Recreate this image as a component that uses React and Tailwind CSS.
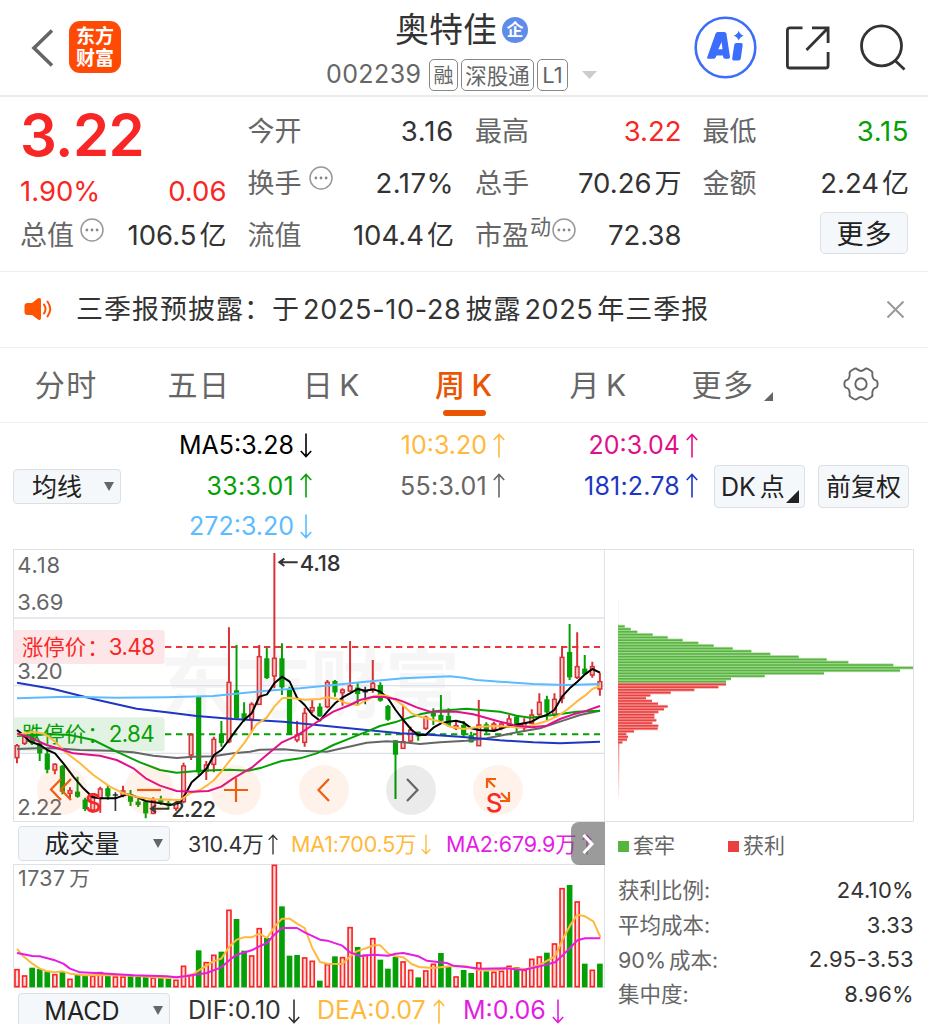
import React from "react";

const RED = "#d93236";
const GREEN = "#05a005";

// Chart geometry uses a grid of three units per pixel.
const STEP = 22.71;
const FIRST = 51;

// [kind, high, bodyTop, bodyBottom, low]
const CANDLES = [
  ["r", 597, 602, 638, 655], ["r", 565, 575, 595, 600], ["g", 560, 568, 590, 600], ["g", 590, 597, 623, 648],
  ["g", 615, 628, 672, 685], ["r", 655, 658, 675, 688], ["g", 660, 665, 738, 748], ["r", 727, 737, 745, 760],
  ["g", 695, 742, 753, 758], ["g", 758, 766, 790, 798], ["r", 745, 755, 795, 803], ["r", 725, 732, 760, 803],
  ["g", 720, 732, 752, 764], ["k", 742, 750, 750, 798], ["r", 722, 738, 752, 757], ["g", 735, 750, 768, 783],
  ["g", 762, 772, 778, 786], ["g", 768, 772, 803, 820], ["r", 757, 765, 805, 808], ["g", 752, 765, 770, 780],
  ["g", 768, 776, 780, 790], ["r", 770, 775, 790, 797], ["r", 653, 663, 770, 775], ["r", 565, 570, 630, 645],
  ["g", 458, 458, 680, 690], ["r", 648, 660, 678, 705], ["r", 575, 583, 658, 682], ["g", 528, 568, 592, 605],
  ["r", 247, 412, 590, 595], ["g", 300, 438, 518, 520], ["g", 472, 507, 520, 530], ["r", 472, 478, 522, 560],
  ["r", 300, 335, 478, 480], ["g", 308, 342, 397, 402], ["r", 24, 340, 393, 430], ["g", 295, 342, 425, 450],
  ["g", 425, 437, 565, 568], ["r", 528, 570, 585, 592], ["r", 488, 505, 592, 605], ["r", 465, 488, 497, 505],
  ["g", 475, 487, 512, 515], ["r", 405, 412, 485, 490], ["g", 405, 410, 440, 455], ["r", 430, 435, 443, 482],
  ["r", 288, 423, 438, 440], ["g", 412, 430, 445, 482], ["k", 425, 440, 440, 478], ["r", 345, 415, 435, 443],
  ["g", 412, 422, 465, 470], ["g", 480, 485, 522, 527], ["g", 585, 588, 627, 762], ["r", 483, 590, 610, 612],
  ["r", 545, 555, 588, 592], ["g", 560, 562, 572, 587], ["r", 512, 517, 550, 555], ["g", 490, 505, 512, 540],
  ["g", 450, 512, 525, 530], ["g", 490, 515, 540, 545], ["r", 530, 542, 550, 555], ["g", 528, 542, 568, 575],
  ["g", 560, 572, 590, 592], ["r", 465, 540, 602, 603], ["g", 532, 540, 555, 565], ["r", 530, 537, 553, 560],
  ["r", 530, 537, 548, 556], ["r", 510, 522, 538, 548], ["g", 512, 517, 545, 560], ["r", 520, 535, 548, 560],
  ["r", 493, 510, 535, 537], ["r", 445, 472, 508, 512], ["g", 452, 465, 500, 525], ["r", 445, 463, 508, 515],
  ["r", 303, 337, 460, 475], ["g", 237, 323, 395, 405], ["r", 262, 365, 397, 402], ["g", 330, 373, 385, 390],
  ["r", 350, 365, 390, 398], ["r", 383, 410, 432, 452],
];

const MA_LINES = [
  ["#666666", "51,612 110,610 165,610 240,615 330,617 400,622 460,632 530,639 580,635 640,634 700,625 750,620 780,614 850,613 900,617 980,620 1040,607 1100,593 1160,589 1210,592 1260,597 1320,592 1400,587 1460,580 1500,572 1560,560 1620,550 1680,530 1740,510 1800,497"],
  ["#1d37c4", "51,413 160,432 280,462 410,491 500,502 590,513 700,522 850,530 950,540 1100,555 1200,565 1300,570 1380,575 1500,586 1600,592 1680,595 1800,590"],
  ["#5cbcff", "51,460 200,455 350,458 500,457 640,453 800,437 900,430 1000,420 1120,408 1210,400 1350,394 1390,398 1430,405 1500,410 1600,417 1700,420 1800,417"],
  ["#05a005", "51,573 150,567 210,570 280,585 350,620 420,652 480,675 530,683 600,677 640,676 690,674 745,677 785,668 845,648 900,640 950,625 1000,600 1050,580 1100,560 1140,543 1190,530 1210,523 1260,508 1310,498 1400,491 1440,495 1500,500 1550,512 1590,518 1660,510 1730,500 1800,497"],
  ["#000000", "51,555 70,570 90,590 120,600 142,615 165,625 190,655 220,695 250,730 278,757 301,760 346,760 380,748 400,752 437,768 482,775 510,780 540,773 560,740 575,712 600,690 620,670 642,630 664,615 687,585 710,553 732,525 755,505 778,455 801,448 823,415 846,395 869,410 891,458 914,480 937,510 960,527 982,500 1005,475 1027,458 1050,445 1073,432 1096,437 1120,433 1141,440 1164,460 1187,495 1210,525 1235,555 1255,570 1277,570 1300,548 1323,535 1345,530 1368,527 1391,533 1414,550 1437,555 1482,558 1505,550 1527,543 1573,535 1595,530 1618,517 1640,510 1663,495 1686,455 1709,430 1732,410 1755,388 1777,372 1800,383"],
  ["#ffb93c", "51,570 100,560 135,567 165,590 195,620 240,655 280,690 330,725 370,745 414,757 460,763 540,765 570,745 600,735 620,722 642,705 664,680 687,650 732,595 770,538 800,518 823,485 846,460 869,458 914,464 960,462 982,457 1010,462 1040,475 1073,480 1100,465 1120,455 1141,450 1160,452 1187,465 1210,482 1235,505 1260,515 1290,522 1320,530 1350,545 1391,552 1440,545 1480,543 1530,545 1560,548 1600,540 1640,528 1670,515 1700,495 1730,470 1755,452 1777,432 1800,423"],
  ["#e0108a", "51,565 90,578 140,600 180,612 220,625 300,632 350,645 400,670 437,700 480,722 530,738 575,740 625,738 664,725 700,700 755,668 800,630 846,592 891,572 960,525 1000,500 1050,480 1080,465 1120,455 1150,456 1190,463 1210,470 1250,487 1290,500 1370,500 1420,508 1500,530 1550,542 1595,547 1640,542 1680,522 1720,508 1760,497 1800,483"],
];

const VOLUMES = "r448 r467 g444 g448 g455 r463 g457 r477 g465 g467 r468 r457 g465 r470 r470 g465 g472 g472 r473 g475 g478 r480 r438 r465 g392 r427 r405 g396 r270 g298 g393 r407 r325 g355 r135 g260 g408 g406 r413 r423 g483 r433 g410 r412 r322 g382 r405 r355 g420 g447 g412 r425 r450 g473 r452 r432 g400 g440 r470 g451 g460 r428 g455 r456 r453 r438 g442 r450 r417 r410 g399 r371 r205 g196 r245 g432 r450 g432"
  .split(" ")
  .map((v) => [v[0], Number(v.slice(1))]);

const VOL_LINES = [
  ["#ffb93c", "51,388 70,410 97,432 119,447 142,455 165,458 187,455 210,462 255,467 300,466 400,468 500,475 550,472 580,463 600,450 640,425 664,417 687,382 710,360 732,353 755,353 778,342 801,355 823,322 846,297 869,297 891,312 914,325 937,385 960,427 982,432 1027,433 1045,415 1070,395 1100,385 1120,377 1141,377 1165,402 1187,410 1210,413 1235,433 1257,442 1300,445 1350,440 1400,440 1440,452 1500,450 1520,445 1580,448 1620,435 1665,410 1690,355 1710,318 1732,285 1755,290 1780,305 1801,352"],
  ["#e41ce4", "51,400 97,409 119,410 165,422 190,432 210,447 240,458 300,461 400,467 500,470 530,473 560,469 620,460 664,443 690,420 710,405 755,392 778,380 801,370 823,345 846,325 891,325 914,338 960,360 982,363 1027,378 1050,398 1080,409 1120,405 1165,408 1187,402 1210,400 1255,410 1280,423 1340,430 1360,438 1400,442 1440,447 1520,446 1570,451 1620,440 1665,428 1690,405 1710,385 1732,362 1755,356 1801,356"],
];

const TRAPPED = [74, 92, 112, 158, 203, 248, 295, 341, 398, 454, 511, 596, 680, 745, 880, 939, 900, 672, 494, 393, 378];
const PROFIT = [378, 355, 283, 212, 151, 138, 156, 174, 203, 192, 175, 163, 163, 169, 157, 175, 173, 102, 79, 84, 81, 67];

function Arrow({ down = false, className = "" }) {
  return (
    <svg className={"shrink-0 " + className} width="12" height="25" viewBox="0 0 12 25" fill="none" stroke="currentColor" strokeWidth="1.6">
      {down ? <path d="M6 .5V23.5M.8 18L6 23.6 11.2 18" /> : <path d="M6 24.5V1.5M.8 7L6 1.4 11.2 7" />}
    </svg>
  );
}

function Dots() {
  return (
    <svg width="24" height="24" viewBox="0 0 24 24" className="shrink-0">
      <circle cx="12" cy="12" r="11" fill="none" stroke="#999" strokeWidth="1.5" />
      <circle cx="6.9" cy="12" r="1.4" fill="#888" />
      <circle cx="12" cy="12" r="1.4" fill="#888" />
      <circle cx="17.1" cy="12" r="1.4" fill="#888" />
    </svg>
  );
}

function Caret({ className = "" }) {
  return (
    <svg width="10" height="9" viewBox="0 0 10 9" className={className}>
      <path d="M0 0H10L5 9Z" fill="#666" />
    </svg>
  );
}

function Header() {
  return (
    <header className="flex h-[97px] border-b-2 border-[#ebebeb]">
      <div className="flex w-[326px] items-start pl-[31px]">
        <svg className="mt-[29px]" width="23" height="38" viewBox="0 0 23 38" fill="none" stroke="#666" strokeWidth="3.6">
          <path d="M21 1.5L3 19 21 36.5" />
        </svg>
        <div className="mt-[21px] ml-[15px] flex h-[52px] w-[52px] flex-col items-center justify-center rounded-[11px] bg-[#ff4a05] pt-px text-[19px] leading-[22px] font-bold text-white">
          <span>东方</span>
          <span>财富</span>
        </div>
      </div>
      <div className="w-[368px]">
        <div className="mt-[8px] flex h-[44px] items-center pl-[69px]">
          <span className="text-[34px] leading-[44px] text-[#333]">奥特佳</span>
          <span className="ml-[5px] flex h-[26px] w-[26px] items-center justify-center rounded-full bg-[#5e8ce8] text-[17px] leading-[26px] font-bold text-white">企</span>
        </div>
        <div className="mt-[7px] flex h-[32px] items-center text-[#666]">
          <span className="w-[103px] text-[25px] tracking-[0.4px]">002239</span>
          <span className="flex h-[32px] w-[29px] items-center justify-center rounded-[5px] border border-[#888] pt-[2px] text-[20px]">融</span>
          <span className="ml-[3px] flex h-[32px] w-[73px] items-center justify-center rounded-[5px] border border-[#888] pt-[2px] text-[21.5px]">深股通</span>
          <span className="ml-[3px] flex h-[32px] w-[31px] items-center justify-center rounded-[5px] border border-[#888] pt-px text-[22px]">L1</span>
          <svg className="ml-[14px]" width="15" height="8" viewBox="0 0 15 8"><path d="M0 0H15L7.5 8Z" fill="#ccc" /></svg>
        </div>
      </div>
      <div className="flex items-start">
        <svg className="mt-[16px]" width="63" height="63" viewBox="0 0 63 63">
          <circle cx="31.5" cy="31.5" r="29.8" fill="none" stroke="#3d6dfb" strokeWidth="2.6" />
          <path fill="#3d6dfb" fillRule="evenodd" d="M21.6 17.5q.6-1.5 2-1.500h6.800q1.700 0 2 1.600l3.600 23.200q.2 2-1.600 2h-3.300q-1.700 0-1.900-1.700l-.2-1.700h-6.400l-1 2.100q-.6 1.300-2 1.300h-5q-2.100 0-1.300-1.900zM24.300 33.200h4.200l-.9-7.200zM42.400 27h4.700q1.900 0 1.600 1.900L46.800 42.600q-.3 1.900-2.200 1.900h-4.800q-1.900 0-1.600-1.900l2-13.700q.3-1.900 2.200-1.900zM44.700 14.800q1.200 3.700 5 4.900-3.800 1.200-5 4.900-1.200-3.700-5-4.900 3.800-1.200 5-4.900z" />
        </svg>
        <svg className="mt-[25px] ml-[28px]" width="46" height="46" viewBox="0 0 46 46" fill="none" stroke="#333" strokeWidth="2.8">
          <path d="M17.500 2.800H5Q2.400 2.800 2.400 5.400V40.400Q2.400 43 5 43H40.500Q43.100 43 43.100 40.400V27" />
          <path d="M27 2.800H43.100V18M43 3L21.500 25" />
        </svg>
        <svg className="mt-[24px] ml-[29px]" width="48" height="48" viewBox="0 0 48 48" fill="none" stroke="#333" strokeWidth="2.8">
          <circle cx="21.500" cy="21.800" r="20" />
          <path d="M34.500 36L44.500 45.500" />
        </svg>
      </div>
    </header>
  );
}

function Cell({ label, extra, value, tone = "text-[#333]" }) {
  return (
    <div className="flex h-[52px] items-center justify-between">
      <div className="flex items-center text-[27px] text-[#666]">
        <span>{label}</span>
        {extra}
      </div>
      <span className={"text-[27.5px] whitespace-nowrap " + tone}>{value}</span>
    </div>
  );
}

function Wide({ n, u }) {
  return (
    <>
      {n}
      <span className="ml-[3px] text-[27px]">{u}</span>
    </>
  );
}

function Quote() {
  const up = "text-[#f92626]";
  return (
    <section className="grid h-[175px] grid-cols-4 gap-x-[21px] border-b border-[#eee] pt-[9px] pr-[19px] pl-[20px]">
      <div>
        <div className="h-[60px] text-[58px] leading-[58px] font-semibold tracking-[-0.6px] text-[#f92626]">3.22</div>
        <div className="flex h-[44px] items-center justify-between pt-[8px] text-[27.5px] text-[#f92626]">
          <span>1.90%</span>
          <span>0.06</span>
        </div>
        <Cell label="总值" extra={<span className="-mt-[13px] ml-[6px]"><Dots /></span>} value={<Wide n="106.5" u="亿" />} />
      </div>
      <div>
        <Cell label="今开" value={<span className="tracking-[0.8px]">3.16</span>} />
        <Cell label="换手" extra={<span className="-mt-[13px] ml-[7px]"><Dots /></span>} value={<span className="tracking-[0.5px]">2.17%</span>} />
        <Cell label="流值" value={<Wide n="104.4" u="亿" />} />
      </div>
      <div>
        <Cell label="最高" value="3.22" tone={up} />
        <Cell label="总手" value={<Wide n="70.26" u="万" />} />
        <Cell
          label="市盈"
          extra={<><span className="-mt-[18px] ml-px text-[21px]">动</span><span className="-mt-[13px] ml-px"><Dots /></span></>}
          value="72.38"
        />
      </div>
      <div>
        <Cell label="最低" value={<span className="tracking-[0.6px]">3.15</span>} tone="text-[#05a005]" />
        <Cell label="金额" value={<Wide n="2.24" u="亿" />} />
        <div className="flex h-[52px] items-start justify-end pt-[2px] pr-px">
          <button className="h-[42px] w-[88px] rounded-[5px] border border-[#dce0ea] bg-[#f5f8fa] pt-[2px] pl-px text-[27px] leading-[40px] tracking-[1px] text-[#222]">更多</button>
        </div>
      </div>
    </section>
  );
}

function Notice() {
  return (
    <section className="flex h-[76px] items-center border-b border-[#f0f0f0] pr-[23px] pl-[24px]">
      <svg className="-mt-[2px]" width="29" height="24" viewBox="0 0 29 24">
        <path d="M14 1.300Q17 0 17 3V21Q17 24 14 22.500L8 18H3.500Q.500 18 .500 15V9Q.500 6 3.500 6H8Z" fill="#ff5500" />
        <path d="M20 7.500Q23 12 20 16.500M23.500 4.500Q29 12 23.500 19.500" fill="none" stroke="#ff5500" strokeWidth="2" strokeLinecap="round" />
      </svg>
      <span className="ml-[23px] flex pt-[2px] text-[27px] whitespace-nowrap text-[#333]">
        <span className="tracking-[1px]">三季报预披露：于</span>
        <span className="ml-[3px] tracking-[0.7px]">2025-10-28</span>
        <span className="ml-[4px] tracking-[1px]">披露</span>
        <span className="ml-[3px] tracking-[0.6px]">2025</span>
        <span className="ml-[4px] tracking-[1px]">年三季报</span>
      </span>
      <svg className="-mt-px ml-auto" width="19" height="19" viewBox="0 0 19 19" stroke="#999" strokeWidth="2">
        <path d="M1.500 1.500L17.500 17.500M17.500 1.500L1.500 17.500" />
      </svg>
    </section>
  );
}

const TABS = [
  ["分时", ""],
  ["五日", ""],
  ["日", "K"],
  ["周", "K"],
  ["月", "K"],
];

function Tabs() {
  return (
    <nav className="flex h-[75px] border-b border-[#eee] text-[30px] text-[#666]">
      {TABS.map(([t, k]) => (
        <div key={t} className={"flex w-[132.700px] flex-col items-center pt-[14px] " + (t === "周" ? "text-[#ea5504]" : "")}>
          <div className={"flex h-[46px] items-center gap-[5px] tracking-[1.500px] " + (t === "周" ? "font-medium" : t === "月" ? "pl-[3px]" : "")}>
            <span>{t}</span>
            {k && <span>{k}</span>}
          </div>
          {t === "周" && <div className="mt-[2px] h-[6px] w-[43px] rounded-full bg-[#ea5504]" />}
        </div>
      ))}
      <div className="flex h-[74px] items-center pl-[28px] tracking-[1.500px]">
        更多
        <svg className="mt-[23px] ml-[10px]" width="9" height="9" viewBox="0 0 9 9"><path d="M9 0V9H0Z" fill="#666" /></svg>
      </div>
      <svg className="mt-[18px] ml-[70px]" width="36" height="36" viewBox="0 0 36 36" fill="none" stroke="#666" strokeWidth="1.900">
        <circle cx="18" cy="18" r="5.700" />
        <path strokeLinejoin="round" d="M10.500 3.200Q13 1.700 14.600 3.600Q18 6.400 21.400 3.600Q23 1.700 25.500 3.200L28.600 5.200Q30 6.500 29.300 8.700Q29.400 13.400 33 14.300Q34.600 14.800 34.600 18Q34.600 21.200 33 21.700Q29.400 22.600 29.300 27.300Q30 29.500 28.600 30.800L25.500 32.800Q23 34.300 21.400 32.400Q18 29.600 14.600 32.400Q13 34.300 10.500 32.800L7.400 30.800Q6 29.500 6.700 27.300Q6.600 22.600 3 21.700Q1.400 21.200 1.400 18Q1.400 14.800 3 14.300Q6.600 13.400 6.700 8.700Q6 6.500 7.400 5.200Z" />
      </svg>
    </nav>
  );
}

function Ma({ text, down, tone }) {
  return (
    <div className={"flex h-[40.500px] w-[193px] items-center justify-end gap-[6px] pr-[2px] text-[25px] whitespace-nowrap " + tone}>
      <span>{text}</span>
      <Arrow down={down} className="-mt-[2px]" />
    </div>
  );
}

function Legend() {
  const button = "rounded-[4px] border border-[#dcdfe6] bg-[#f5f8fa] text-[25px] text-[#222]";
  return (
    <section className="flex h-[126px] items-center pl-[13px]">
      <button className={"flex h-[35px] w-[108px] items-center justify-between pr-[6px] pl-[18px] " + button}>
        <span className="pt-[3px]">均线</span>
        <Caret />
      </button>
      <div className="grid grid-cols-3 pt-px">
        <Ma text="MA5:3.28" down tone="text-black" />
        <Ma text="10:3.20" tone="text-[#ffb93c]" />
        <Ma text="20:3.04" tone="text-[#e0108a]" />
        <Ma text="33:3.01" tone="text-[#05a005] tracking-[0.3px]" />
        <Ma text="55:3.01" tone="text-[#666] tracking-[0.3px]" />
        <Ma text="181:2.78" tone="text-[#1d37c4] tracking-[0.2px]" />
        <Ma text="272:3.20" down tone="text-[#5cbcff]" />
      </div>
      <button className={"ml-[14px] flex h-[43px] w-[91px] items-center pl-[6px] " + button}>
        <span className="pt-[3px]">DK</span>
        <span className="ml-[4px] pt-[3px]">点</span>
        <svg className="mt-[21px] ml-px shrink-0" width="13" height="13" viewBox="0 0 13 13"><path d="M13 0V13H0Z" fill="#222" /></svg>
      </button>
      <button className={"ml-[13px] h-[43px] w-[91px] pt-[3px] " + button}>前复权</button>
    </section>
  );
}

function Label({ x, y, w, children, fill = "#666", size = 66, weight = 400 }) {
  return (
    <text x={x} y={y} fill={fill} fontSize={size} fontWeight={weight} textLength={w}>
      {children}
    </text>
  );
}

function Line({ color, points }) {
  return <polyline points={points} fill="none" stroke={color} strokeWidth="6" strokeLinejoin="round" />;
}

function KChart() {
  return (
    <svg className="block" width="592" height="273" viewBox="39 12 1776 819">
      <rect x="40.500" y="13.500" width="1773" height="816" fill="#fff" stroke="#dfe1e8" strokeWidth="3" />
      <text x="480" y="500" fontSize="225" fontWeight="700" fill="#f6f6f6" textLength="900">东方财富</text>
      {[219, 422, 625].map((y) => (
        <path key={y} d={`M41 ${y}H1812`} stroke="#dde0ea" strokeWidth="4" />
      ))}
      <path d="M41 255H486q8 0 8 8V349q0 8-8 8H41Z" fill="#fde6e8" />
      <path d="M41 517H486q8 0 8 8V611q0 8-8 8H41Z" fill="#e2f3e4" />
      <path d="M495 306H1800" stroke="#e8383c" strokeWidth="6" strokeDasharray="19 14" />
      <path d="M495 568H1800" stroke={GREEN} strokeWidth="6" strokeDasharray="19 14" />
      <Label x="52" y="84" w="128">4.18</Label>
      <Label x="52" y="196" w="138">3.69</Label>
      <Label x="52" y="402" w="136">3.20</Label>
      <Label x="52" y="809" w="135">2.22</Label>
      <Label x="66" y="330" w="192" fill="#f92626" size="64">涨停价</Label>
      <Label x="262" y="330" fill="#f92626" size="64">：</Label>
      <Label x="326" y="330" w="139" fill="#f92626" size="67">3.48</Label>
      <Label x="66" y="592" w="192" fill={GREEN} size="64">跌停价</Label>
      <Label x="262" y="592" fill={GREEN} size="64">：</Label>
      <Label x="326" y="592" w="138" fill={GREEN} size="67">2.84</Label>
      {CANDLES.map(([kind, high, top, bottom, low], i) => {
        const x = FIRST + i * STEP;
        if (kind === "k") {
          return <path key={i} d={`M${x} ${high}V${low}M${x - 8} ${top}H${x + 8}`} stroke="#333" strokeWidth="5" />;
        }
        const color = kind === "r" ? RED : GREEN;
        return (
          <g key={i} stroke={color}>
            <path d={`M${x} ${high}V${top}M${x} ${bottom}V${low}`} strokeWidth="6" />
            <rect
              x={x - 5.5} y={top} width="11" height={Math.max(bottom - top, 3)}
              fill={kind === "r" ? "#f6c4c5" : GREEN} strokeWidth="4.500"
            />
          </g>
        );
      })}
      {MA_LINES.map(([color, points]) => <Line key={color} color={color} points={points} />)}
      <path d="M838 52H893M853 41L838 52 853 63" fill="none" stroke="#333" strokeWidth="6" />
      <Label x="899" y="77" w="123" fill="#333" weight="500">4.18</Label>
      <path d="M453 791H508M468 780L453 791 468 802" fill="none" stroke="#333" strokeWidth="6" />
      <Label x="514" y="815" w="134" fill="#333" weight="500">2.22</Label>
      <Label x="254" y="800" w="48" fill="#f92626" size="78" weight="500">S</Label>
      <Label x="1457" y="800" w="48" fill="#f92626" size="78" weight="500">S</Label>
    </svg>
  );
}

const TOOLS = [
  ["first", "M24 14L14 24.500 24 35M34 14L24 24.500 34 35"],
  ["minus", "M13 25H37"],
  ["plus", "M13 25H37M25 13V37"],
  ["prev", "M30 14L19.500 25 30 36"],
  ["next", "M21 14L31.500 25 21 36"],
  ["expand", "M14 23V14H23M14 14L22 22M36 27V36H27M36 36L28 28"],
];

function ChartTools() {
  return (
    <div className="absolute top-[216px] left-[24px] flex gap-[37.200px]">
      {TOOLS.map(([name, d]) => (
        <svg key={name} width="50" height="50" viewBox="0 0 50 50" fill="none" strokeWidth="2.200">
          <circle cx="25" cy="25" r="25" fill={name === "next" ? "#000" : "#ff6a1a"} fillOpacity={name === "next" ? 0.08 : 0.09} />
          <path d={d} stroke={name === "next" ? "#666" : "#f25c0a"} />
        </svg>
      ))}
    </div>
  );
}

function VolumeChart() {
  return (
    <svg className="block" width="592" height="124" viewBox="39 133 1776 372">
      <rect x="40.500" y="134.500" width="1773" height="369" fill="#fff" stroke="#dfe1e8" strokeWidth="3" />
      <Label x="54" y="199" w="141" size="64">1737</Label>
      <Label x="208" y="199" size="62">万</Label>
      {VOLUMES.map(([kind, top], i) => {
        const x = FIRST + i * STEP;
        return kind === "r" ? (
          <rect key={i} x={x - 6} y={top + 2} width="12" height={499 - top} fill="#ffdcdc" stroke="#f92626" strokeWidth="5" />
        ) : (
          <rect key={i} x={x - 8.5} y={top} width="17" height={503 - top} fill={GREEN} />
        );
      })}
      {VOL_LINES.map(([color, points]) => <Line key={color} color={color} points={points} />)}
    </svg>
  );
}

function CostChart() {
  const rows = [...TRAPPED.map((v) => ["#56b53c", v]), ...PROFIT.map((v) => ["#ea4040", v])];
  return (
    <svg className="block" width="309" height="273" viewBox="15 -153 927 819">
      <path d="M15 -151.500H940.500V664.500H15" fill="none" stroke="#dfe1e8" strokeWidth="3" />
      <defs>
        <linearGradient id="tail" x1="0" y1="0" x2="0" y2="1">
          <stop offset="0" stopColor="#ea4040" stopOpacity="0.600" />
          <stop offset="1" stopColor="#ea4040" stopOpacity="0" />
        </linearGradient>
      </defs>
      <rect x="54" y="430" width="4" height="180" fill="url(#tail)" />
      <rect x="54" y="0" width="2" height="80" fill="#56b53c" opacity="0.120" />
      {rows.map(([color, end], i) => {
        const y = 79 + i * 8.29;
        return (
          <g key={i} fill={color}>
            <rect x="54" y={y - 5} width={end - 54} height="10" opacity="0.400" />
            <rect x="54" y={y - 2.5} width={end - 54} height="5" />
          </g>
        );
      })}
    </svg>
  );
}

function Picker({ children }) {
  return (
    <button className="ml-[5px] flex h-[35px] w-[152px] shrink-0 items-center rounded-[4px] border border-[#dcdfe6] bg-[#f5f8fa] pr-[6px] text-[25px] text-[#222]">
      <span className="flex-1 pt-[3px] pr-[8px] text-center">{children}</span>
      <Caret />
    </button>
  );
}

function Stat({ label, value }) {
  return (
    <div className="flex h-[34.700px] items-center justify-between">
      <span className="text-[21.500px] text-[#666]">{label}</span>
      <span className="text-[22px] tracking-[0.300px] text-[#333]">{value}</span>
    </div>
  );
}

function Charts() {
  return (
    <section className="flex pl-[13px]">
      <div className="w-[592px]">
        <div className="relative h-[273px]">
          <KChart />
          <ChartTools />
        </div>
        <div className="relative flex h-[42px] items-center text-[21.500px] tracking-[-0.200px] whitespace-nowrap">
          <div className="tracking-normal"><Picker>成交量</Picker></div>
          <span className="ml-[18px] flex w-[103px] items-center gap-[4px] pt-[2px] text-[#333]">310.4万<Arrow className="h-[21px]" /></span>
          <span className="flex w-[155px] items-center gap-[4px] pt-[2px] text-[#ffb93c]">MA1:700.5万<Arrow down className="h-[21px]" /></span>
          <span className="flex items-center gap-[4px] pt-[2px] text-[#e41ce4]">MA2:679.9万<Arrow className="h-[21px]" /></span>
          <div className="absolute top-0 right-0 flex h-[43px] w-[34px] items-center justify-center rounded-l-[8px] bg-[#666]/65">
            <svg width="12" height="20" viewBox="0 0 12 20" fill="none" stroke="#fff" strokeWidth="3"><path d="M1.500 1L10 10 1.500 19" /></svg>
          </div>
        </div>
        <VolumeChart />
        <div className="mt-[4px] flex h-[36px] items-center text-[25px] whitespace-nowrap">
          <Picker>MACD</Picker>
          <span className="ml-[18px] flex w-[129px] items-center gap-[7px] pt-[2px] text-[#333]">DIF:0.10<Arrow down /></span>
          <span className="flex w-[146px] items-center gap-[7px] pt-[2px] text-[#ffb93c]">DEA:0.07<Arrow /></span>
          <span className="flex items-center gap-[6px] pt-[2px] text-[#e41ce4]">M:0.06<Arrow down /></span>
        </div>
      </div>
      <div className="w-[309px]">
        <CostChart />
        <div className="flex h-[48px] items-center pl-[13px] text-[21px] text-[#666]">
          <span className="h-[11px] w-[11px] bg-[#56b53c]" />
          <span className="ml-[4px] w-[95px]">套牢</span>
          <span className="h-[11px] w-[11px] bg-[#ea4040]" />
          <span className="ml-[4px]">获利</span>
        </div>
        <div className="mt-[3px] pl-[13px]">
          <Stat label="获利比例:" value="24.10%" />
          <Stat label="平均成本:" value="3.33" />
          <Stat label={<>90%<span className="ml-[3px]">成本:</span></>} value="2.95-3.53" />
          <Stat label="集中度:" value="8.96%" />
        </div>
      </div>
    </section>
  );
}

export default function App() {
  return (
    <main className="h-[1024px] w-[928px] overflow-hidden bg-white font-['Inter','Noto_Sans_CJK_SC',sans-serif]">
      <Header />
      <Quote />
      <Notice />
      <Tabs />
      <Legend />
      <Charts />
    </main>
  );
}
